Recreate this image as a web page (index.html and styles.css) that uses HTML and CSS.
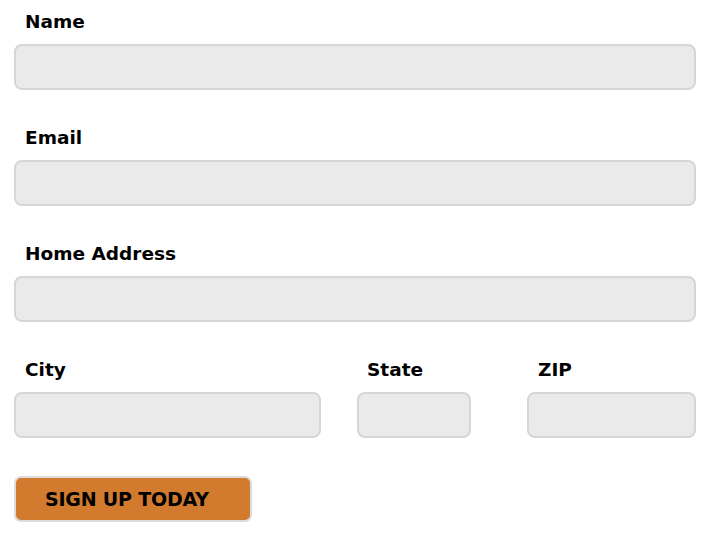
FILE: index.html
```html
<!DOCTYPE html>
<html>
<head>
<meta charset="utf-8">
<link rel="stylesheet" href="styles.css">
</head>
<body>
<form class="form">
  <div class="field">
    <label class="label">Name</label>
    <input class="input" type="text">
  </div>
  <div class="field">
    <label class="label">Email</label>
    <input class="input" type="text">
  </div>
  <div class="field">
    <label class="label">Home Address</label>
    <input class="input" type="text">
  </div>
  <div class="row">
    <div class="field city">
      <label class="label">City</label>
      <input class="input" type="text">
    </div>
    <div class="field state">
      <label class="label">State</label>
      <input class="input" type="text">
    </div>
    <div class="field zip">
      <label class="label">ZIP</label>
      <input class="input" type="text">
    </div>
  </div>
  <button class="btn" type="button">SIGN UP TODAY</button>
</form>
</body>
</html>
```
FILE: styles.css
```css
html, body {
  margin: 0;
  padding: 0;
  background: #ffffff;
}
body {
  font-family: "DejaVu Sans", sans-serif;
}
.form {
  padding: 10px 23px 0 14px;
  display: flex;
  flex-direction: column;
  align-items: flex-start;
}
.field {
  display: flex;
  flex-direction: column;
  width: 100%;
  margin-bottom: 36px;
}
.label {
  display: block;
  font-size: 18.5px;
  font-weight: bold;
  line-height: 24px;
  color: #000;
  padding-left: 11px;
  margin-bottom: 10px;
}
.input {
  box-sizing: border-box;
  height: 46px;
  width: 100%;
  background: #eaeaea;
  border: 2px solid #d6d6d6;
  border-radius: 8px;
  margin: 0;
  padding: 0;
}
.row {
  display: flex;
  width: 100%;
}
.row .field {
  margin-bottom: 0;
}
.city {
  width: 307px;
  flex: none;
  margin-right: 36px;
}
.state {
  width: 114px;
  flex: none;
  margin-right: 56px;
}
.state .label {
  padding-left: 10px;
}
.zip {
  flex: 1;
}
.btn {
  box-sizing: border-box;
  width: 238px;
  height: 46px;
  background: #d27b2e;
  border: 2px solid #dcdcdc;
  border-radius: 7px;
  color: #000;
  font-family: "DejaVu Sans", sans-serif;
  font-weight: bold;
  font-size: 19px;
  letter-spacing: -0.2px;
  text-align: left;
  padding: 0 0 0 29px;
  margin-top: 38px;
}
```
